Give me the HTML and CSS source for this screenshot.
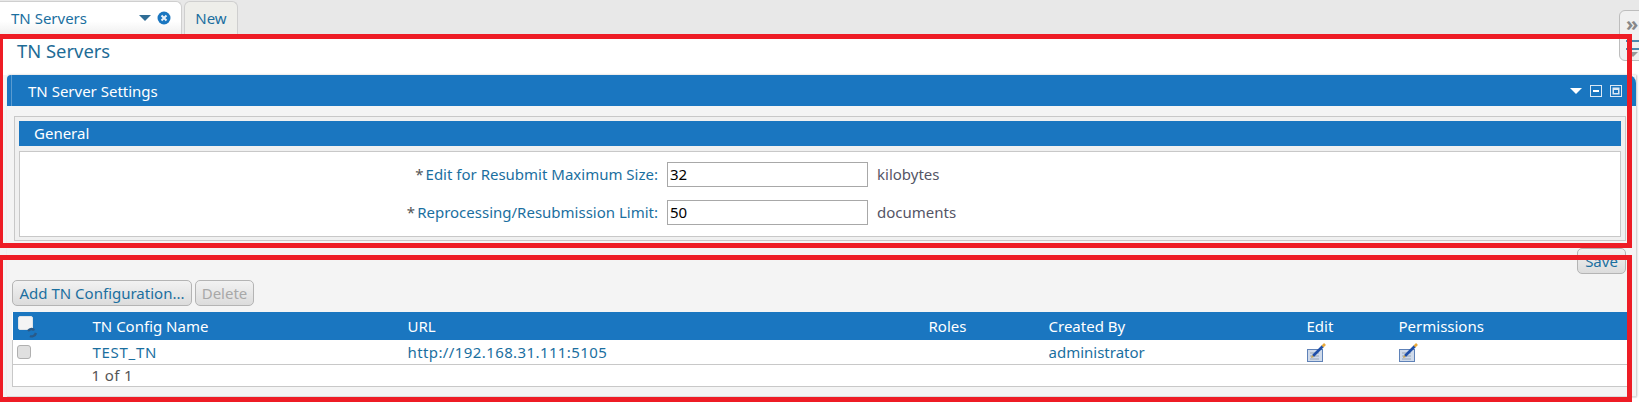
FILE: index.html
```html
<!DOCTYPE html>
<html lang="en">
<head>
<meta charset="utf-8">
<title>TN Servers</title>
<link rel="stylesheet" href="styles.css">
</head>
<body>
<nav class="tabbar">
  <div class="tab tab-active">
    <span class="tab-label">TN Servers</span>
    <span class="tab-arrow"></span>
    <svg class="tab-close" width="14" height="14" viewBox="0 0 14 14"><circle cx="7" cy="7" r="6.5" fill="#1a76c0"/><path d="M4.5 4.5l5 5M9.500 4.500l-5 5" stroke="#e8f0f8" stroke-width="2"/></svg>
  </div>
  <div class="tab tab-new">New</div>
</nav>
<div class="side-tools">
  <span class="chev">»</span>
  <span class="menu-lines"></span>
  <span class="menu-arrow"></span>
</div>
<main class="page">
  <h1 class="page-title">TN Servers</h1>
  <section class="panel">
    <header class="panel-head">
      <span class="panel-title">TN Server Settings</span>
      <span class="panel-tools">
        <span class="arrow-white"></span>
        <svg width="12" height="12" viewBox="0 0 12 12"><rect x=".5" y=".5" width="11" height="11" fill="none" stroke="#dbe8f4"/><rect x="3" y="5" width="6" height="2" fill="#fff"/></svg>
        <svg width="12" height="12" viewBox="0 0 12 12"><rect x=".5" y=".5" width="11" height="11" fill="none" stroke="#dbe8f4"/><rect x="2.500" y="2.500" width="7" height="7" fill="#dbe8f4"/><rect x="4" y="5" width="4" height="3" fill="#1a76c0"/></svg>
      </span>
    </header>
    <div class="panel-body">
      <div class="group">
        <div class="group-head">General</div>
        <div class="group-body">
          <div class="field">
            <label class="field-label"><span class="req">*</span>Edit for Resubmit Maximum Size:</label>
            <input class="field-input" type="text" value="32">
            <span class="field-unit">kilobytes</span>
          </div>
          <div class="field">
            <label class="field-label"><span class="req">*</span>Reprocessing/Resubmission Limit:</label>
            <input class="field-input" type="text" value="50">
            <span class="field-unit">documents</span>
          </div>
        </div>
      </div>
      <div class="save-row"><button class="btn btn-save">Save</button></div>
      <div class="actions">
        <button class="btn btn-add">Add TN Configuration...</button>
        <button class="btn btn-off">Delete</button>
      </div>
      <table class="grid">
        <colgroup>
          <col class="c-check"><col class="c-name"><col class="c-url"><col class="c-roles"><col class="c-by"><col class="c-edit"><col>
        </colgroup>
        <thead>
          <tr>
            <th><svg class="head-check" width="22" height="24" viewBox="0 0 22 24"><rect x="1.500" y="2.500" width="14" height="13" rx="1.500" fill="#f4f4f4" stroke="#dfe4e8"/><path d="M11 17c2-2.500 5-2.500 6-.5M13 22c2 1 5 0 6-3" fill="none" stroke="#2a5a88" stroke-width="2.400"/></svg></th>
            <th>TN Config Name</th><th>URL</th><th>Roles</th><th>Created By</th><th>Edit</th><th>Permissions</th>
          </tr>
        </thead>
        <tbody>
          <tr class="row">
            <td><span class="check"></span></td>
            <td class="cell-id">TEST_TN</td>
            <td class="cell-url">http://192.168.31.111:5105</td>
            <td></td>
            <td>administrator</td>
            <td><svg class="edit-ic" width="20" height="20" viewBox="0 0 20 20"><rect x=".5" y="7.500" width="15" height="12" fill="#cfdaea" stroke="#5f82b8"/><path d="M3 11h9M3 14h9M3 17h9" stroke="#98a6b8"/><path d="M6 14L16 4" stroke="#1f4fa8" stroke-width="2.600"/><path d="M15.500 4.500l2.500-2.500" stroke="#e8a93c" stroke-width="2.600"/><path d="M4 16l3-1-2-2z" fill="#caa24a"/></svg></td>
            <td><svg class="edit-ic" width="20" height="20" viewBox="0 0 20 20"><rect x=".5" y="7.500" width="15" height="12" fill="#cfdaea" stroke="#5f82b8"/><path d="M3 11h9M3 14h9M3 17h9" stroke="#98a6b8"/><path d="M6 14L16 4" stroke="#1f4fa8" stroke-width="2.600"/><path d="M15.500 4.500l2.500-2.500" stroke="#e8a93c" stroke-width="2.600"/><path d="M4 16l3-1-2-2z" fill="#caa24a"/></svg></td>
          </tr>
          <tr class="pager"><td></td><td colspan="6"><span class="pager-text">1 of 1</span></td></tr>
        </tbody>
      </table>
    </div>
  </section>
</main>
<div class="mark mark-top"></div>
<div class="mark mark-bottom"></div>
</body>
</html>
```
FILE: styles.css
```css
* { box-sizing: border-box; }
html, body { margin: 0; height: 100%; }
body {
  position: relative;
  width: 1639px;
  height: 406px;
  overflow: hidden;
  background: #fff;
  font-family: "Noto Sans", "Open Sans", sans-serif;
  font-size: 15px;
  color: #1b6f9f;
}
.tabbar {
  display: flex;
  gap: 2px;
  height: 34px;
  padding-top: 1px;
  background: #e8e8e8;
}
.tab {
  display: flex;
  align-items: center;
  height: 33px;
  border: 1px solid #cfcfcf;
  border-bottom: 0;
  border-radius: 6px 6px 0 0;
  padding: 0 10px 0 11px;
}
.tab-active {
  width: 182px;
  background: linear-gradient(#ffffff, #ffffff 60%, #f0f0f0);
  border-left: 0;
  border-top-left-radius: 0;
}
.tab-label { flex: 1; }
.tab-arrow {
  width: 0; height: 0;
  border: 6px solid transparent;
  border-top: 6px solid #2f6d96;
  border-bottom: 0;
  margin-right: 6px;
}
.tab-new { width: 54px; justify-content: center; background: #eeeeea; padding: 0; }
.side-tools {
  position: absolute;
  left: 1619px;
  top: 10px;
  width: 30px;
  height: 51px;
  border: 1px solid #bdbdbd;
  border-radius: 6px;
  background: #f0f0f0;
  z-index: 3;
}
.chev { position: absolute; left: 6px; top: 3px; font-size: 20px; line-height: 20px; font-weight: 700; color: #888; }
.menu-lines { position: absolute; left: 6px; top: 29px; width: 14px; height: 10px; border-top: 2px solid #4b87ad; border-bottom: 2px solid #4b87ad; }
.menu-arrow { position: absolute; left: 8px; top: 41px; width: 0; height: 0; border: 5px solid transparent; border-top-color: #999; border-bottom: 0; }
.page {
  position: relative;
  z-index: 2;
  width: 1637px;
  height: 364px;
  background: #f4f4f4;
}
.page-title {
  margin: 0;
  height: 41px;
  padding: 3px 0 0 17px;
  background: #fff;
  font-size: 18.4px;
  line-height: 28px;
  font-weight: 400;
  color: #1e6c96;
}
.panel { margin: 0 1px 0 7px; box-shadow: 1px 0 2px #c8c8c8; }
.panel-head {
  display: flex;
  align-items: center;
  justify-content: space-between;
  height: 31px;
  padding: 0 14px 0 21px;
  background: linear-gradient(90deg, #1a76c0 4px, #5a9bd0 4px, #5a9bd0 5px, #1a76c0 5px);
  border-radius: 4px 8px 0 0;
  color: #fff;
}
.panel-tools { display: flex; align-items: center; gap: 8px; }
.arrow-white { width: 0; height: 0; border: 6px solid transparent; border-top-color: #fff; border-bottom: 0; }
.panel-body {
  height: 291px;
  padding: 10px 0 0 7px;
  border-bottom: 1px solid #dcdcdc;
}
.group {
  width: 1612px;
  height: 125px;
  border: 1px solid #c8c8c8;
  padding: 4px;
  background: #f0f0f0;
}
.group-head {
  height: 25px;
  padding-left: 15px;
  line-height: 25px;
  background: #1a76c0;
  color: #fff;
}
.group-body {
  height: 86px;
  padding-top: 3px;
  margin-top: 5px;
  background: #fff;
  border: 1px solid #c8c8c8;
}
.field {
  display: flex;
  align-items: center;
  height: 38px;
}
.field-label {
  width: 647px;
  padding-right: 9px;
  text-align: right;
}
.req { color: #555; margin-right: 2px; }
.field-input {
  width: 201px;
  height: 25px;
  padding: 0 2px;
  border: 1px solid #a8a8a8;
  font: inherit;
  color: #000;
}
.field-unit { margin-left: 9px; color: #556; }
.save-row { display: flex; justify-content: flex-end; width: 1612px; height: 32px; padding-top: 7px; box-sizing: content-box; }
.btn {
  height: 26px;
  padding: 0;
  border: 1px solid #b4b4b4;
  border-radius: 5px;
  background: linear-gradient(#f2f2f2, #dcdcdc);
  font: inherit;
  color: #1b6f9f;
}
.btn-add { width: 180px; }
.btn-off { width: 59px; color: #a8a8a8; }
.btn-save { width: 49px; }
.actions { display: flex; gap: 3px; margin-left: -2px; height: 32px; align-items: flex-start; }
.grid {
  margin-left: -2px;
  width: 1616px;
  border-collapse: collapse;
  table-layout: fixed;
  background: #fff;
}
.c-check { width: 80px; }
.c-name { width: 315px; }
.c-url { width: 521px; }
.c-roles { width: 120px; }
.c-by { width: 258px; }
.c-edit { width: 92px; }
.grid th {
  height: 28px;
  padding: 0;
  text-align: left;
  font-weight: 400;
  color: #fff;
  background: #1a76c0;
}
.head-check { display: block; margin-left: 4px; }
.grid td { padding: 0; }
.grid td:first-child { border-left: 1px solid #c8c8c8; }
.cell-id { letter-spacing: .7px; }
.cell-url { letter-spacing: .4px; }
.row td { height: 24px; border-bottom: 1px solid #c8c8c8; }
.pager td { height: 22px; border-bottom: 1px solid #c8c8c8; color: #555; }
.pager-text { margin-left: -1px; letter-spacing: .4px; }
.check {
  display: block;
  width: 14px; height: 14px;
  margin-left: 4px;
  border: 1px solid #b0b0b0;
  border-radius: 3px;
  background: #e0e0e0;
}
.edit-ic { display: block; }
.mark {
  position: absolute;
  left: -2px;
  width: 1634px;
  border: 5px solid #ee1c25;
  z-index: 5;
}
.mark-top { top: 34px; height: 214px; }
.mark-bottom { top: 255px; height: 147px; }
```
